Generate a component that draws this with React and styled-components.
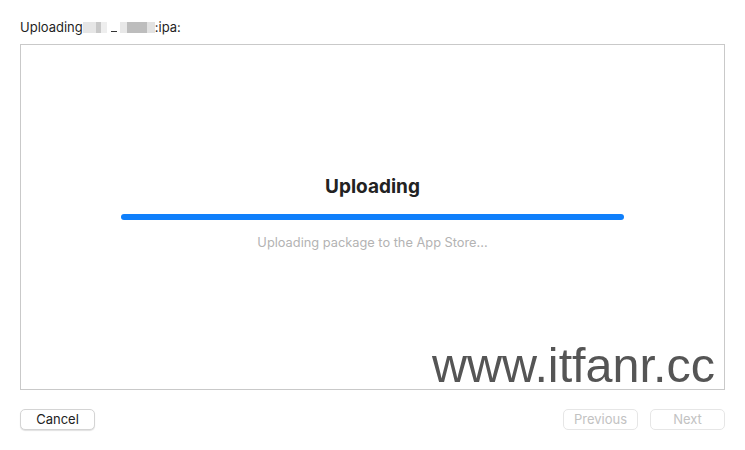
import React from "react";
import styled, { createGlobalStyle } from "styled-components";

const Global = createGlobalStyle`
  html, body { margin: 0; padding: 0; background: #ffffff; }
  body { font-family: Inter, "Liberation Sans", sans-serif; -webkit-font-smoothing: antialiased; }
`;

const Window = styled.div`
  width: 745px;
  height: 450px;
  box-sizing: border-box;
  background: #fff;
  border-radius: 11px;
  padding: 19px 20px 0 20px;
  display: flex;
  flex-direction: column;
`;

const Title = styled.div`
  font-size: 13px;
  color: #1f1f1f;
  height: 16px;
  line-height: 16px;
  display: flex;
  align-items: center;
`;

const Blur = styled.span`
  display: inline-block;
  width: ${(p) => p.w}px;
  height: 11px;
  background: ${(p) => p.c};
`;

const Under = styled.span`
  display: inline-block;
  width: 6px;
  margin: 0 3px 0 4px;
  height: 1px;
  align-self: flex-end;
  margin-bottom: 3px;
  background: #333;
`;

const Panel = styled.div`
  position: relative;
  margin-top: 9px;
  width: 705px;
  height: 346px;
  box-sizing: border-box;
  border: 1px solid #c9c9c9;
  display: flex;
  flex-direction: column;
  align-items: center;
  padding-top: 130px;
`;

const Heading = styled.div`
  font-size: 19px;
  font-weight: 700;
  color: #222;
  line-height: 23px;
`;

const Track = styled.div`
  margin-top: 16px;
  width: 503px;
  height: 6px;
  border-radius: 3px;
  background: #0f7ffb;
`;

const Sub = styled.div`
  margin-top: 15px;
  font-size: 12.8px;
  color: #b3b3b3;
  line-height: 15px;
`;

const Watermark = styled.div`
  position: absolute;
  right: 9px;
  bottom: -4px;
  font-family: "Liberation Sans", Arial, sans-serif;
  font-size: 48.5px;
  color: #555555;
  line-height: 56px;
`;

const Footer = styled.div`
  margin-top: 19px;
  display: flex;
  align-items: center;
  gap: 12px;
`;

const Spacer = styled.div`
  flex: 1;
`;

const Button = styled.button`
  width: 75px;
  height: 21px;
  box-sizing: border-box;
  border-radius: 5px;
  border: 1px solid ${(p) => (p.disabled ? "#e6e6e6" : "#d4d4d4")};
  background: #fff;
  box-shadow: ${(p) => (p.disabled ? "none" : "0 1px 1px rgba(0,0,0,0.12)")};
  font-family: Inter, "Liberation Sans", sans-serif;
  font-size: 13px;
  color: ${(p) => (p.disabled ? "#c2c2c2" : "#222")};
  padding: 0;
  line-height: 19px;
`;

export default function App() {
  return (
    <>
      <Global />
      <Window>
        <Title>
          Uploading
          <Blur w={13} c="#e6e6e6" />
          <Blur w={5} c="#c8c8c8" />
          <Blur w={6} c="#eeeeee" />
          <Under />
          <Blur w={7} c="#e8e8e8" />
          <Blur w={20} c="#bdbdbd" />
          <Blur w={8} c="#e2e2e2" />
          :ipa:
        </Title>
        <Panel>
          <Heading>Uploading</Heading>
          <Track />
          <Sub>Uploading package to the App Store...</Sub>
          <Watermark>www.itfanr.cc</Watermark>
        </Panel>
        <Footer>
          <Button>Cancel</Button>
          <Spacer />
          <Button disabled>Previous</Button>
          <Button disabled>Next</Button>
        </Footer>
      </Window>
    </>
  );
}
